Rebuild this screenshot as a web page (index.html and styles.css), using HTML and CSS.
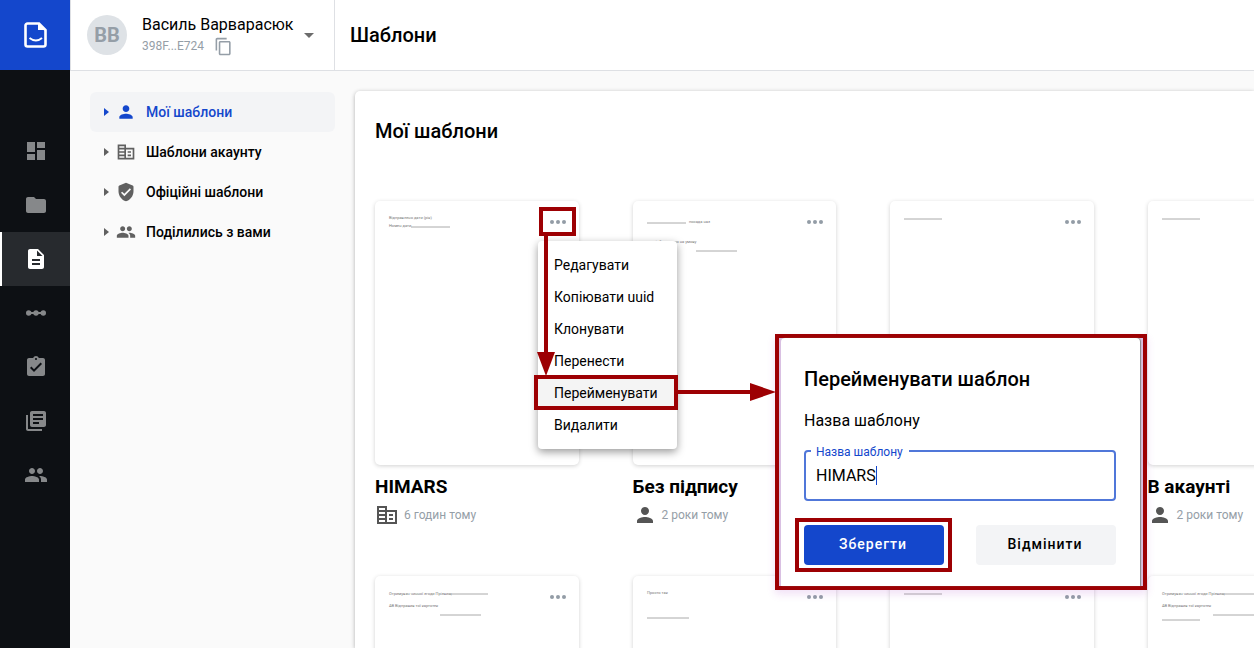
FILE: index.html
```html
<!DOCTYPE html>
<html lang="uk">
<head>
<meta charset="utf-8">
<title>Шаблони</title>
<meta name="viewport" content="width=device-width, initial-scale=1">
<link rel="stylesheet" href="styles.css">
</head>
<body>
<svg class="sprite" aria-hidden="true">
  <symbol id="dashboard" viewBox="0 0 24 24"><path d="M3 13h8V3H3v10zm0 8h8v-6H3v6zm10 0h8V11h-8v10zm0-18v6h8V3h-8z"/></symbol>
  <symbol id="folder" viewBox="0 0 24 24"><path d="M10 4H4c-1.1 0-1.99.9-1.99 2L2 18c0 1.1.9 2 2 2h16c1.1 0 2-.9 2-2V8c0-1.1-.9-2-2-2h-8l-2-2z"/></symbol>
  <symbol id="description" viewBox="0 0 24 24"><path d="M14 2H6c-1.1 0-1.99.9-1.99 2L4 20c0 1.1.89 2 1.99 2H18c1.1 0 2-.9 2-2V8l-6-6zm2 16H8v-2h8v2zm0-4H8v-2h8v2zm-3-5V3.5L18.5 9H13z"/></symbol>
  <symbol id="steps" viewBox="0 0 24 24"><path d="M4 11h16v2H4z"/><circle cx="4.700" cy="12" r="2.700"/><circle cx="12" cy="12" r="2.700"/><circle cx="19.300" cy="12" r="2.700"/></symbol>
  <symbol id="task" viewBox="0 0 24 24"><path d="M19 3h-4.180C14.400 1.840 13.300 1 12 1c-1.300 0-2.400.84-2.820 2H5c-1.100 0-2 .9-2 2v14c0 1.100.9 2 2 2h14c1.100 0 2-.9 2-2V5c0-1.100-.9-2-2-2zm-7 0c.55 0 1 .45 1 1s-.45 1-1 1-1-.45-1-1 .45-1 1-1zm-2 14l-4-4 1.410-1.410L10 14.170l6.590-6.590L18 9l-8 8z"/></symbol>
  <symbol id="library" viewBox="0 0 24 24"><path d="M4 6H2v14c0 1.100.9 2 2 2h14v-2H4V6zm16-4H8c-1.100 0-2 .9-2 2v12c0 1.100.9 2 2 2h12c1.100 0 2-.9 2-2V4c0-1.100-.9-2-2-2zm-1 9H9V9h10v2zm-4 4H9v-2h6v2zm4-8H9V5h10v2z"/></symbol>
  <symbol id="people" viewBox="0 0 24 24"><path d="M16 11c1.660 0 2.990-1.340 2.990-3S17.660 5 16 5c-1.660 0-3 1.340-3 3s1.340 3 3 3zm-8 0c1.660 0 2.990-1.340 2.990-3S9.660 5 8 5C6.340 5 5 6.340 5 8s1.340 3 3 3zm0 2c-2.330 0-7 1.170-7 3.500V19h14v-2.500c0-2.330-4.670-3.500-7-3.500zm8 0c-.29 0-.62.02-.97.05 1.160.84 1.970 1.970 1.970 3.450V19h6v-2.500c0-2.330-4.670-3.500-7-3.500z"/></symbol>
  <symbol id="person" viewBox="0 0 24 24"><path d="M12 12c2.210 0 4-1.790 4-4s-1.790-4-4-4-4 1.790-4 4 1.790 4 4 4zm0 2c-2.670 0-8 1.340-8 4v2h16v-2c0-2.660-5.330-4-8-4z"/></symbol>
  <symbol id="business" viewBox="0 0 24 24"><path fill-rule="evenodd" d="M2 3h10v4h10v14H2zM4 5v2h6V5zM4 9v2h6V9zM4 13v2h6v-2zM4 17v2h6v-2zM12 9v10h8V9zM14 11h4v2h-4zM14 15h4v2h-4z"/></symbol>
  <symbol id="shield" viewBox="0 0 24 24"><path d="M12 1L4 4.300Q3 4.800 3 5.800V11c0 5.550 3.840 10.740 9 12 5.160-1.260 9-6.450 9-12V5.800Q21 4.800 20 4.300zm-2 16l-4-4 1.410-1.410L10 14.170l6.590-6.590L18 9l-8 8z"/></symbol>
  <symbol id="copy" viewBox="0 0 24 24"><path d="M16 1H4c-1.100 0-2 .9-2 2v14h2V3h12V1zm3 4H8c-1.100 0-2 .9-2 2v14c0 1.100.9 2 2 2h11c1.100 0 2-.9 2-2V7c0-1.100-.9-2-2-2zm0 16H8V7h11v14z"/></symbol>
  <symbol id="arrow" viewBox="0 0 5 8"><path d="M0 0l5 4-5 4z"/></symbol>
  <symbol id="dots" viewBox="0 0 16 4"><circle cx="2" cy="2" r="2"/><circle cx="8" cy="2" r="2"/><circle cx="14" cy="2" r="2"/></symbol>
</svg>

<div class="app">
  <nav class="rail" aria-label="Головне меню">
    <a class="logo" href="#" aria-label="Головна"><svg width="24" height="28" viewBox="0 0 24 28"><path d="M3.500 2.500h11.500l6.500 6.500v14.500a2 2 0 0 1-2 2h-16a2 2 0 0 1-2-2v-19a2 2 0 0 1 2-2z" fill="none" stroke="#fff" stroke-width="2.600"/><path d="M14 2v7h8z" fill="#fff"/><path d="M5.500 17q6.500 5 12.500 0" fill="none" stroke="#fff" stroke-width="2"/></svg></a>
    <div class="rail-items">
      <a class="rail-item" href="#" aria-label="Панель"><svg class="icon"><use href="#dashboard"/></svg></a>
      <a class="rail-item" href="#" aria-label="Документи"><svg class="icon"><use href="#folder"/></svg></a>
      <a class="rail-item active" href="#" aria-label="Шаблони"><svg class="icon"><use href="#description"/></svg></a>
      <a class="rail-item" href="#" aria-label="Процеси"><svg class="icon"><use href="#steps"/></svg></a>
      <a class="rail-item" href="#" aria-label="Завдання"><svg class="icon"><use href="#task"/></svg></a>
      <a class="rail-item" href="#" aria-label="Довідники"><svg class="icon"><use href="#library"/></svg></a>
      <a class="rail-item" href="#" aria-label="Користувачі"><svg class="icon"><use href="#people"/></svg></a>
    </div>
  </nav>

  <div class="page">
    <header class="topbar">
      <div class="account">
        <span class="avatar">ВВ</span>
        <div class="who">
          <span class="name">Василь Варварасюк</span>
          <span class="uid">398F...E724 <button class="plain" aria-label="Копіювати"><svg class="icon-copy"><use href="#copy"/></svg></button></span>
        </div>
        <button class="plain" aria-label="Змінити акаунт"><svg class="caret-down" viewBox="0 0 10 5"><path d="M0 0h10L5 5z"/></svg></button>
      </div>
      <h1 class="heading">Шаблони</h1>
    </header>

    <div class="body">
      <nav class="folders" aria-label="Шаблони">
        <a class="folder active" href="#"><svg class="arrow"><use href="#arrow"/></svg><svg class="icon-small"><use href="#person"/></svg>Мої шаблони</a>
        <a class="folder" href="#"><svg class="arrow"><use href="#arrow"/></svg><svg class="icon-small"><use href="#business"/></svg>Шаблони акаунту</a>
        <a class="folder" href="#"><svg class="arrow"><use href="#arrow"/></svg><svg class="icon-small"><use href="#shield"/></svg>Офіційні шаблони</a>
        <a class="folder" href="#"><svg class="arrow"><use href="#arrow"/></svg><svg class="icon-small"><use href="#people"/></svg>Поділились з вами</a>
      </nav>

      <main class="panel">
        <h2 class="heading">Мої шаблони</h2>
        <div class="grid">
          <article>
            <div class="card"><svg class="preview"><text x="14" y="18">Відправлено дати (рік)</text><text x="14" y="26">Номен дати</text><path d="M36 26h39"/></svg><button class="plain more" aria-label="Дії"><svg class="dots"><use href="#dots"/></svg></button></div>
            <h3 class="title">HIMARS</h3>
            <p class="meta"><svg class="icon"><use href="#business"/></svg>6 годин тому</p>
          </article>
          <article>
            <div class="card"><svg class="preview"><path d="M14 22h39M63 50h41"/><text x="56" y="22">посада наз</text><text x="14" y="42">що відбулось що на умову</text></svg><button class="plain more" aria-label="Дії"><svg class="dots"><use href="#dots"/></svg></button></div>
            <h3 class="title">Без підпису</h3>
            <p class="meta"><svg class="icon"><use href="#person"/></svg>2 роки тому</p>
          </article>
          <article>
            <div class="card"><svg class="preview"><path d="M14 18h38"/></svg><button class="plain more" aria-label="Дії"><svg class="dots"><use href="#dots"/></svg></button></div>
          </article>
          <article>
            <div class="card"><svg class="preview"><path d="M14 18h38"/></svg><button class="plain more" aria-label="Дії"><svg class="dots"><use href="#dots"/></svg></button></div>
            <h3 class="title">В акаунті</h3>
            <p class="meta"><svg class="icon"><use href="#person"/></svg>2 роки тому</p>
          </article>
          <article>
            <div class="card"><svg class="preview"><text x="14" y="19">Отримувач чинної згоди Прізвищ</text><path d="M74 18h39M65 39h41"/><text x="14" y="31">АВ Відправив тої картотек</text></svg><button class="plain more" aria-label="Дії"><svg class="dots"><use href="#dots"/></svg></button></div>
          </article>
          <article>
            <div class="card"><svg class="preview"><text x="14" y="18">Просто так</text><path d="M14 42h42"/></svg><button class="plain more" aria-label="Дії"><svg class="dots"><use href="#dots"/></svg></button></div>
          </article>
          <article>
            <div class="card"><svg class="preview"><path d="M14 18h38"/></svg><button class="plain more" aria-label="Дії"><svg class="dots"><use href="#dots"/></svg></button></div>
          </article>
          <article>
            <div class="card"><svg class="preview"><text x="14" y="19">Отримувач чинної згоди Прізвищ</text><path d="M74 18h39M65 39h41M14 44h38"/><text x="14" y="31">АВ Відправив тої картотек</text></svg><button class="plain more" aria-label="Дії"><svg class="dots"><use href="#dots"/></svg></button></div>
          </article>
        </div>
      </main>
    </div>
  </div>
</div>

<div class="menu">
  <button class="menu-item">Редагувати</button>
  <button class="menu-item">Копіювати uuid</button>
  <button class="menu-item">Клонувати</button>
  <button class="menu-item">Перенести</button>
  <button class="menu-item selected">Перейменувати</button>
  <button class="menu-item">Видалити</button>
</div>

<section class="callout" role="dialog" aria-labelledby="dialog-title">
  <form class="dialog">
    <h2 class="heading" id="dialog-title">Перейменувати шаблон</h2>
    <p class="prompt">Назва шаблону</p>
    <div class="field">
      <label class="label" for="template-name">Назва шаблону</label>
      <input class="input" id="template-name" type="text" value="HIMARS">
      <span class="cursor"></span>
    </div>
    <div class="actions">
      <button class="button primary" type="button">Зберегти</button>
      <button class="button" type="button">Відмінити</button>
    </div>
  </form>
</section>

<span class="mark mark-more"></span>
<span class="mark mark-rename"></span>
<span class="mark mark-save"></span>
<svg class="mark-arrow mark-down" viewBox="0 0 18 142"><path d="M7 0h4v118h7L9 142 0 118h7z"/></svg>
<svg class="mark-arrow mark-right" viewBox="0 0 98 18"><path d="M0 7h72V0l26 9-26 9v-7H0z"/></svg>
</body>
</html>
```

FILE: styles.css
```css
* { box-sizing: border-box; }

body {
  margin: 0;
  height: 100vh;
  overflow: hidden;
  background: #fafafa;
  color: #000;
  font: 14px/20px Roboto, "Noto Sans", sans-serif;
}

h1, h2, h3, p { margin: 0; }
a { color: inherit; text-decoration: none; }
svg { display: block; flex: none; fill: currentColor; }
button, input { font: inherit; color: inherit; }

.sprite { position: absolute; width: 0; height: 0; }
.plain { display: block; padding: 0; border: 0; background: none; }
.icon { width: 24px; height: 24px; }
.icon-small { width: 20px; height: 20px; }
.icon-copy { width: 19px; height: 19px; }
.heading { font-size: 20px; line-height: 24px; font-weight: 500; }

.app { display: flex; height: 100%; }

/* Icon rail */
.rail { flex: none; width: 70px; background: #0d1014; color: #86888a; }
.logo {
  display: flex;
  align-items: center;
  justify-content: center;
  height: 70px;
  padding-left: 2px;
  background: #1447cc;
}
.rail-items { padding-top: 54px; }
.rail-item {
  display: flex;
  align-items: center;
  justify-content: center;
  height: 54px;
  padding-left: 2px;
}
.rail-item.active { padding-left: 0; border-left: 2px solid #fff; background: #272a2e; color: #fff; }

.page { flex: 1; min-width: 0; display: flex; flex-direction: column; }

/* Top bar */
.topbar {
  display: flex;
  align-items: center;
  flex: none;
  height: 71px;
  border-bottom: 1px solid #dee0e4;
  background: #fff;
}
.account {
  display: flex;
  align-items: center;
  width: 265px;
  height: 100%;
  margin-right: 15px;
  padding-left: 16px;
  border: solid #dee0e4;
  border-width: 0 1px;
}
.avatar {
  width: 40px;
  height: 40px;
  border-radius: 50%;
  background: #dee2e6;
  color: #959ea7;
  font-size: 20px;
  line-height: 40px;
  font-weight: 700;
  text-align: center;
}
.who { display: flex; flex-direction: column; margin: 0 11px 0 15px; }
.name { font-size: 16px; line-height: 22px; }
.uid { display: flex; align-items: center; gap: 10px; color: #959ea7; font-size: 12px; }
.caret-down { width: 10px; height: 5px; color: #6c6c6c; }

/* Folder list and panel */
.body { display: flex; flex: 1; min-height: 0; gap: 20px; padding: 20px 0 0 20px; }
.folders { flex: none; width: 245px; padding-top: 1px; }
.folder {
  display: flex;
  align-items: center;
  height: 40px;
  padding-left: 14px;
  border-radius: 6px;
  font-weight: 500;
}
.folder svg { color: #606060; }
.folder .arrow { width: 5px; height: 8px; margin-right: 7px; }
.folder .icon-small { margin-right: 10px; }
.folder.active { background: #f3f4f6; }
.folder.active, .folder.active svg { color: #1447cc; }

.panel {
  flex: 1;
  min-width: 0;
  overflow: hidden;
  padding: 28px 0 0 20px;
  border-radius: 5px 0 0 0;
  background: #fff;
  box-shadow: 0 1px 4px rgba(0, 0, 0, .3);
}
.grid {
  display: grid;
  grid-template-columns: repeat(4, 1fr);
  gap: 49px 54px;
  margin: 58px -97px 0 0;
}
.card {
  position: relative;
  aspect-ratio: 203 / 263;
  border-radius: 5px;
  background: #fff;
  box-shadow: 0 1px 4px rgba(0, 0, 0, .18);
}
.preview { width: 100%; height: 100%; font-size: 4px; fill: #777; }
.preview path { fill: none; stroke: #aaa; }
.more { position: absolute; top: 19px; right: 13px; color: #939ca6; }
.dots { width: 16px; height: 4px; }
.title { margin-top: 9px; font-size: 19px; line-height: 26px; font-weight: 700; }
.meta {
  display: flex;
  align-items: center;
  gap: 5px;
  height: 24px;
  margin-top: 3px;
  color: #959ea7;
  font-size: 12px;
}
.meta svg { color: #555; }

/* Context menu */
.menu {
  position: absolute;
  top: 241px;
  left: 538px;
  width: 139px;
  padding: 8px 0;
  border-radius: 4px;
  background: #fff;
  box-shadow: 0 3px 8px rgba(0, 0, 0, .4);
}
.menu-item {
  display: block;
  width: 100%;
  height: 32px;
  padding: 0 0 0 16px;
  border: 0;
  background: none;
  text-align: left;
  white-space: nowrap;
}
.menu-item.selected { background: #f4f4f4; }

/* Rename dialog */
.callout {
  position: absolute;
  top: 334px;
  left: 775px;
  width: 372px;
  padding: 0 3px 0 2px;
  border: 4px solid #9d0003;
  background: #d9c0e2;
  box-shadow: 0 4px 8px rgba(170, 60, 200, .16);
}
.dialog {
  padding: 29px 24px 21px 23px;
  border-radius: 4px 4px 0 0;
  background: #fff;
  box-shadow: 1px 0 1px #888;
}
.prompt { margin-top: 20px; font-size: 16px; }
.field { position: relative; margin-top: 19px; }
.label {
  position: absolute;
  top: -6px;
  left: 7px;
  padding: 0 6px 0 5px;
  background: #fff;
  color: #1447cc;
  font-size: 12px;
  line-height: 16px;
}
.input {
  display: block;
  width: 100%;
  height: 51px;
  padding: 0 10px;
  border: 2px solid #5077d9;
  border-radius: 4px;
  outline: 0;
  background: #fff;
  font-size: 16px;
}
.cursor { position: absolute; top: 16px; left: 72px; width: 1px; height: 19px; background: #1447cc; }
.actions { display: flex; justify-content: space-between; margin-top: 24px; }
.button {
  width: 140px;
  height: 40px;
  padding: 0 2px 2px 0;
  border: 0;
  border-radius: 4px;
  background: #f3f4f6;
  font-weight: 500;
  letter-spacing: 1px;
}
.button.primary { background: #1447cc; color: #fff; }

/* Tutorial annotations */
.mark { position: absolute; border: 4px solid #9d0003; pointer-events: none; }
.mark-more { top: 207px; left: 539px; width: 37px; height: 29px; }
.mark-rename { top: 375px; left: 534px; width: 144px; height: 35px; }
.mark-save { top: 518px; left: 795px; width: 157px; height: 54px; }
.mark-arrow { position: absolute; fill: #9d0003; pointer-events: none; }
.mark-down { top: 234px; left: 537px; width: 18px; height: 142px; }
.mark-right { top: 383px; left: 678px; width: 98px; height: 18px; }
```
